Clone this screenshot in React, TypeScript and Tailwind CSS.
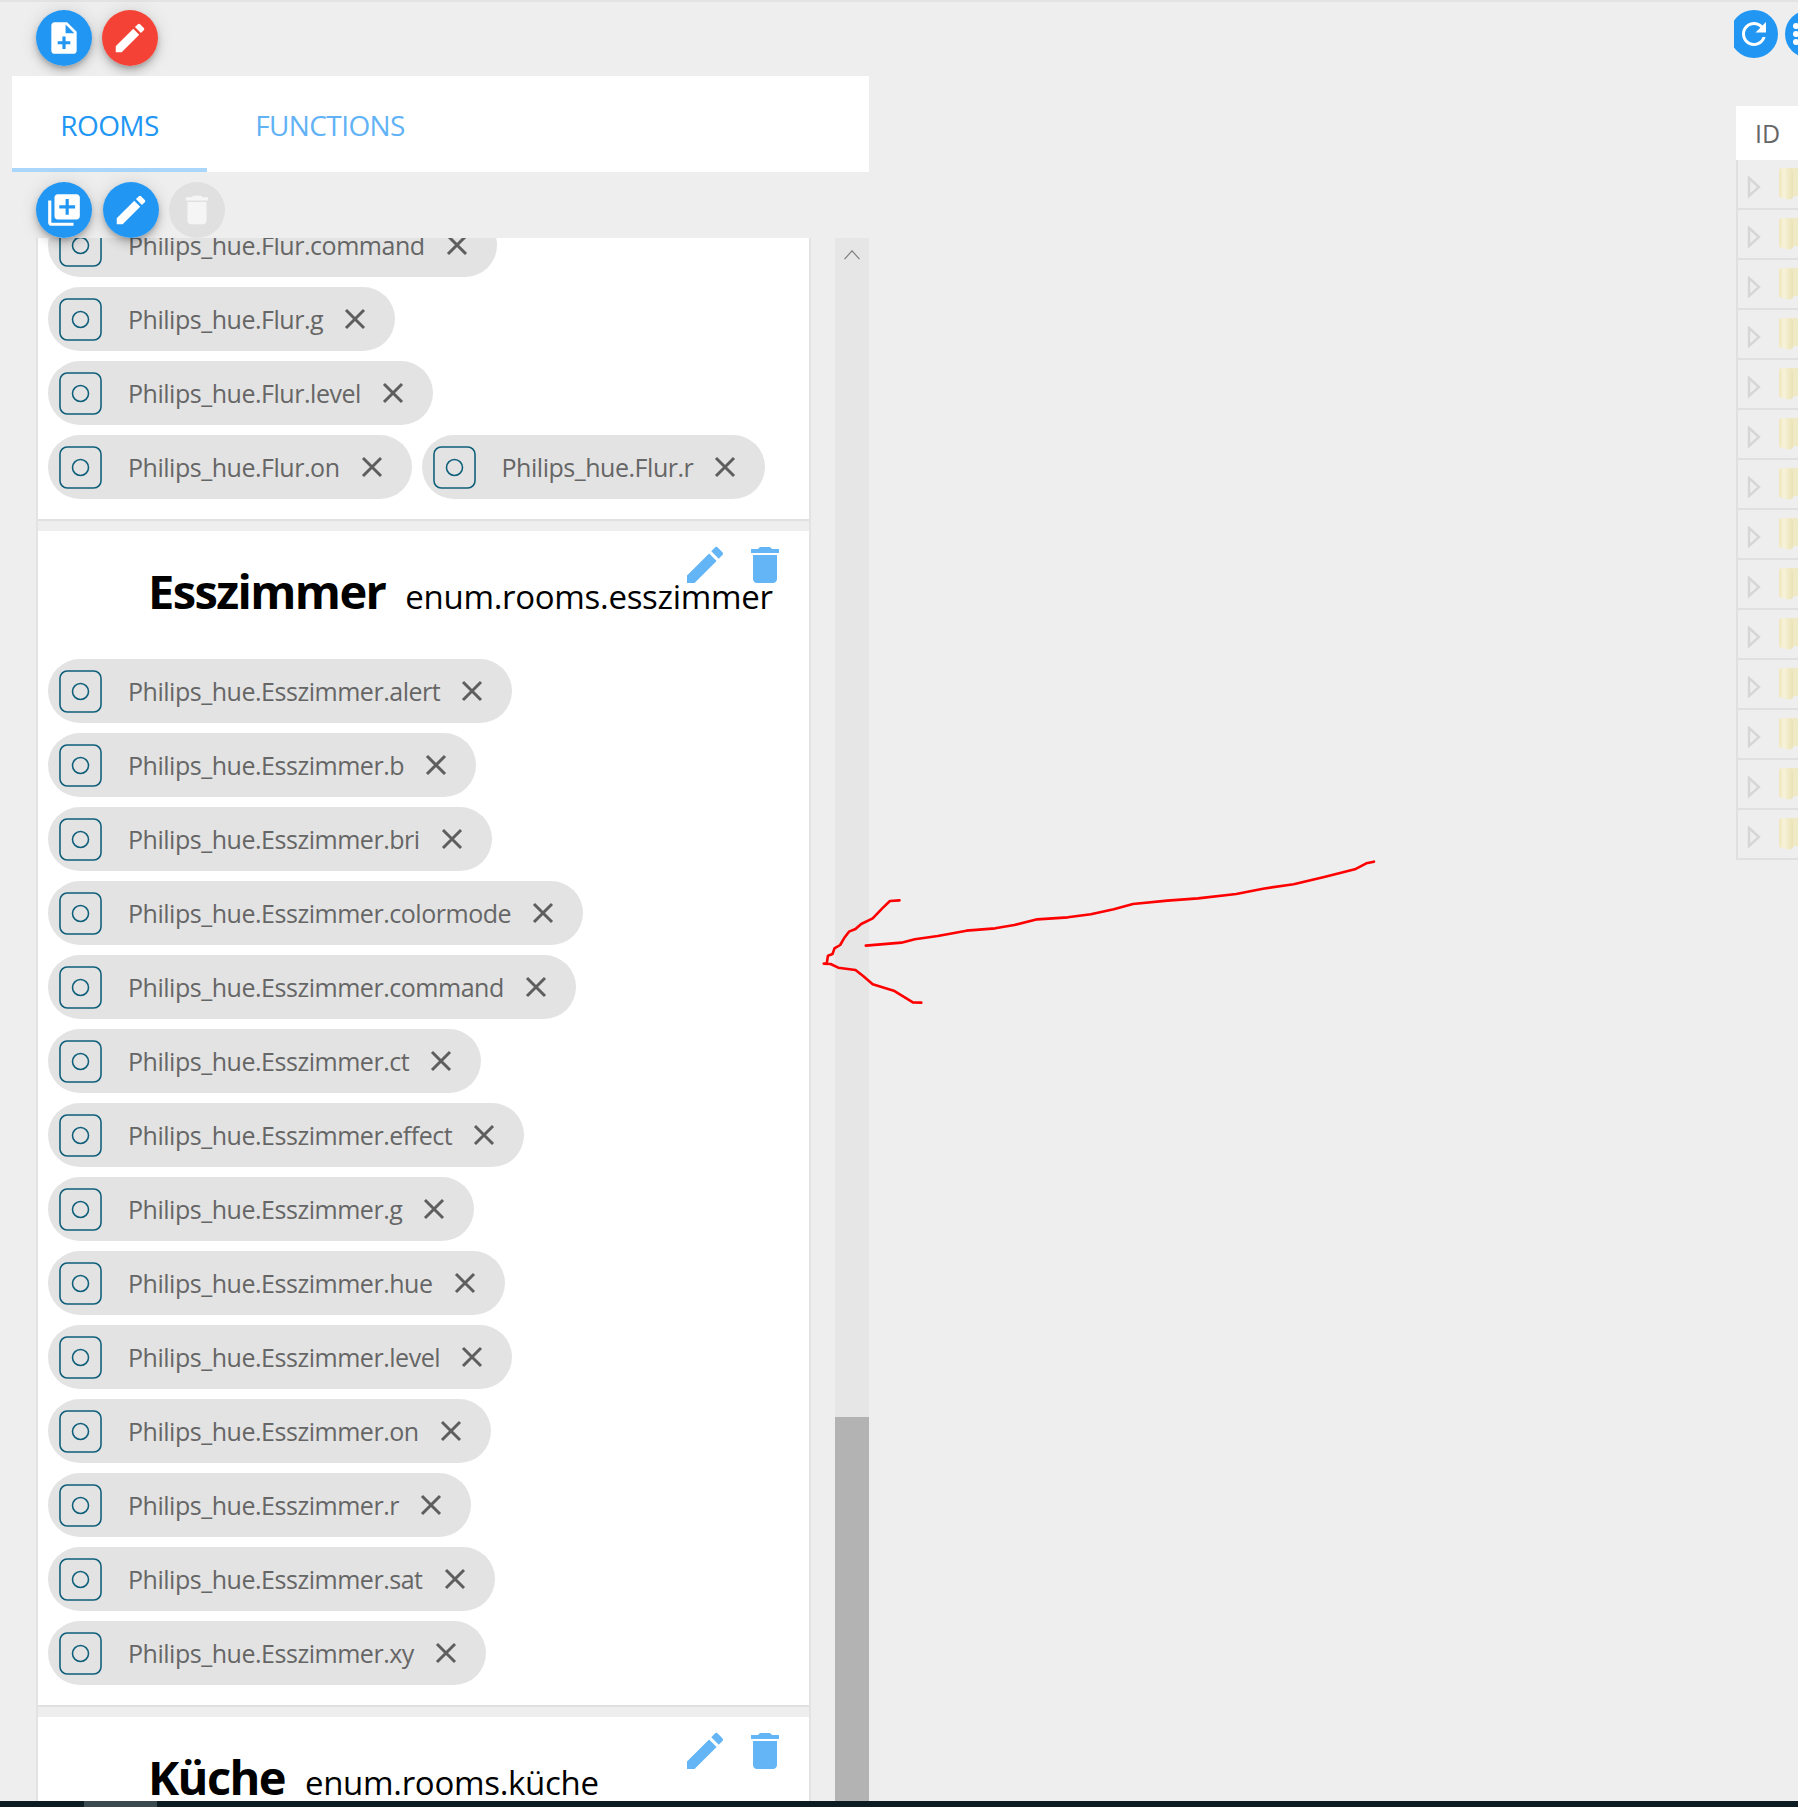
import React from "react";

const P = {
  edit: "M3 17.25V21h3.75L17.81 9.94l-3.75-3.75L3 17.25zM20.71 7.04c.39-.39.39-1.02 0-1.41l-2.34-2.34a.9959.9959 0 0 0-1.41 0l-1.83 1.83 3.75 3.75 1.83-1.83z",
  note: "M14 2H6c-1.1 0-1.99.9-1.99 2L4 20c0 1.1.89 2 1.99 2H18c1.1 0 2-.9 2-2V8l-6-6zm2 14h-3v3h-2v-3H8v-2h3v-3h2v3h3v2zm-3-7V3.5L18.5 9H13z",
  lib: "M4 6H2v14c0 1.1.9 2 2 2h14v-2H4V6zm16-4H8c-1.1 0-2 .9-2 2v12c0 1.1.9 2 2 2h12c1.1 0 2-.9 2-2V4c0-1.1-.9-2-2-2zm-1 9h-4v4h-2v-4H9V9h4V5h2v4h4v2z",
  del: "M6 19c0 1.1.9 2 2 2h8c1.1 0 2-.9 2-2V7H6v12zM19 4h-3.5l-1-1h-5l-1 1H5v2h14V4z",
  refresh: "M17.65 6.35C16.2 4.9 14.21 4 12 4c-4.42 0-7.99 3.58-7.99 8s3.57 8 7.99 8c3.73 0 6.84-2.55 7.73-6h-2.08c-.82 2.33-3.04 4-5.65 4-3.31 0-6-2.69-6-6s2.69-6 6-6c1.66 0 3.14.69 4.22 1.78L13 11h7V4l-2.35 2.35z",
};

const shadow = "shadow-[0_3px_5px_-1px_rgba(0,0,0,0.2),0_6px_10px_0_rgba(0,0,0,0.14),0_1px_18px_0_rgba(0,0,0,0.12)]";

function Icon({ d, className }: { d: string; className: string }) {
  return (
    <svg viewBox="0 0 24 24" className={className} fill="currentColor">
      <path d={d} />
    </svg>
  );
}

function Fab({ d, color }: { d: string; color: string }) {
  return (
    <button className={`flex h-[56px] w-[56px] shrink-0 items-center justify-center rounded-full text-white ${color}`}>
      <Icon d={d} className="h-[38px] w-[38px]" />
    </button>
  );
}

function Chip({ label }: { label: string }) {
  return (
    <div className="flex h-[64px] items-center rounded-full bg-[#e3e3e3] pl-[11px] pr-[26px]">
      <svg viewBox="0 0 44 44" className="h-[43px] w-[43px] shrink-0" fill="none" stroke="#0f5f7a" strokeWidth="1.6">
        <rect x="1" y="1" width="42" height="42" rx="7.5" />
        <circle cx="22" cy="22" r="8.2" />
      </svg>
      <span className="ml-[26px] whitespace-nowrap text-[25px] leading-none tracking-[-0.47px] text-[#666666]">{label}</span>
      <svg viewBox="0 0 28 28" className="ml-[18px] h-[28px] w-[28px] shrink-0" fill="none" stroke="#5e5e5e" strokeWidth="3">
        <path d="M5 5l18 18M23 5L5 23" />
      </svg>
    </div>
  );
}

function Section({ name, id, chips }: { name: string; id: string; chips: string[] }) {
  return (
    <section className="relative mb-[10px] border-b-2 border-[#e0e0e0] bg-white pb-[20px]">
      <div className="absolute right-[20px] top-[10px] flex gap-[12px] text-[#64b5f6]">
        <Icon d={P.edit} className="h-[48px] w-[48px]" />
        <Icon d={P.del} className="h-[48px] w-[48px]" />
      </div>
      <div className="flex h-[128px] items-baseline pl-[110px] pt-[28px] text-black">
        <span className="text-[47px] font-bold leading-[64px] tracking-[-1.6px]">{name}</span>
        <span className="ml-[20px] text-[33px] leading-[64px] tracking-[-0.3px]">{id}</span>
      </div>
      <div className="flex flex-wrap gap-[10px] pl-[10px]">
        {chips.map((c) => (
          <Chip key={c} label={c} />
        ))}
      </div>
    </section>
  );
}

const flur = ["command", "g", "level", "on", "r"].map((s) => `Philips_hue.Flur.${s}`);
const ess = ["alert", "b", "bri", "colormode", "command", "ct", "effect", "g", "hue", "level", "on", "r", "sat", "xy"].map(
  (s) => `Philips_hue.Esszimmer.${s}`
);

function TreeRow() {
  return (
    <div className="flex h-[50px] items-center overflow-hidden border-b-2 border-[#e0e0e0] pl-[9px]">
      <svg viewBox="0 0 14 22" className="mt-[5px] h-[22px] w-[14px] shrink-0" fill="none" stroke="#d6d6d6" strokeWidth="2.4">
        <path d="M2 2l10 9-10 9z" />
      </svg>
      <svg viewBox="0 0 32 34" className="ml-[18px] h-[34px] w-[32px] shrink-0">
        <defs>
          <linearGradient id="leaf" x1="0" x2="1" y1="0" y2="0">
            <stop offset="0" stopColor="#efe6bc" />
            <stop offset="0.35" stopColor="#f7f2da" />
            <stop offset="1" stopColor="#ebe2b4" />
          </linearGradient>
        </defs>
        <path d="M12 1h20v28H12z" fill="#f0e9c6" />
        <path d="M0 4q0-3 3-3h6q5 0 5 4v26q-4 3-9 0H3q-3 0-3-3z" fill="url(#leaf)" />
      </svg>
    </div>
  );
}

export default function App() {
  return (
    <div className="relative flex h-[1807px] w-[1798px] flex-col overflow-hidden bg-[#eeeeee] font-['Open_Sans',sans-serif]">
      <div className="flex min-h-0 flex-1 border-t-2 border-[#e3e3e3]">
        <div className="flex w-[869px] shrink-0 flex-col pl-[12px]">
          <div className="flex h-[74px] shrink-0 gap-[10px] pl-[24px] pt-[8px]">
            <div className={`rounded-full ${shadow} h-[56px]`}><Fab d={P.note} color="bg-[#2196f3]" /></div>
            <div className={`rounded-full ${shadow} h-[56px]`}><Fab d={P.edit} color="bg-[#f44336]" /></div>
          </div>
          <div className="flex h-[96px] shrink-0 bg-white">
            <div className="flex h-full w-[195px] items-center justify-center border-b-4 border-[#a9d6fa] pt-[6px] text-[28px] text-[#2196f3]">
              <span className="tracking-[-0.6px]">ROOMS</span>
            </div>
            <div className="flex h-full w-[246px] items-center justify-center pt-[2px] text-[28px] text-[#62b2f6]">
              <span className="tracking-[-0.6px]">FUNCTIONS</span>
            </div>
          </div>
          <div className="relative z-10 flex h-[66px] shrink-0 gap-[11px] pl-[24px] pt-[10px]">
            <div className={`rounded-full ${shadow} h-[56px]`}><Fab d={P.lib} color="bg-[#2196f3]" /></div>
            <div className={`rounded-full ${shadow} h-[56px]`}><Fab d={P.edit} color="bg-[#2196f3]" /></div>
            <div className="-ml-[1px]"><Fab d={P.del} color="bg-[#e0e0e0] !text-[#f5f5f5]" /></div>
          </div>
          <div className="flex min-h-0 flex-1">
            <div className="ml-[24px] w-[775px] overflow-hidden border-x-2 border-[#e3e3e3]">
              <section className="mb-[10px] border-b-2 border-[#e0e0e0] bg-white pb-[20px]">
                <div className="-mt-[25px] flex flex-wrap gap-[10px] pl-[10px]">
                  <div className="w-full"><div className="inline-flex"><Chip label={flur[0]} /></div></div>
                  <div className="w-full"><div className="inline-flex"><Chip label={flur[1]} /></div></div>
                  <div className="w-full"><div className="inline-flex"><Chip label={flur[2]} /></div></div>
                  <Chip label={flur[3]} />
                  <Chip label={flur[4]} />
                </div>
              </section>
              <Section name="Esszimmer" id="enum.rooms.esszimmer" chips={ess} />
              <Section name="Küche" id="enum.rooms.küche" chips={[]} />
            </div>
            <div className="ml-[24px] flex w-[34px] flex-col bg-[#e6e6e6]">
              <div className="flex h-[34px] items-center justify-center">
                <svg viewBox="0 0 20 12" className="h-[10px] w-[18px]" fill="none" stroke="#777777" strokeWidth="1.3">
                  <path d="M1 11L10 1l9 10" />
                </svg>
              </div>
              <div className="flex-1" />
              <div className="h-[384px] bg-[#b3b3b3]" />
            </div>
          </div>
        </div>
        <div className="ml-auto flex w-[64px] flex-col overflow-hidden">
          <div className="-ml-[4px] flex h-[104px] shrink-0 gap-[7px] pt-[8px]">
            <div className="flex h-[48px] w-[48px] shrink-0 items-center justify-center rounded-full bg-[#2196f3] text-white">
              <Icon d={P.refresh} className="h-[36px] w-[36px]" />
            </div>
            <div className="flex h-[48px] w-[48px] shrink-0 items-center rounded-full bg-[#2196f3] pl-[8px] text-white">
              <svg viewBox="0 0 6 22" className="h-[22px] w-[6px]" fill="currentColor">
                <circle cx="3" cy="3" r="3" />
                <circle cx="3" cy="11" r="3" />
                <circle cx="3" cy="19" r="3" />
              </svg>
            </div>
          </div>
          <div className="ml-[2px] flex h-[54px] shrink-0 items-center bg-white pl-[19px] pt-[2px] text-[25px] text-[#666666]">ID</div>
          <div className="ml-[2px] border-l-2 border-[#e0e0e0]">
            {Array.from({ length: 14 }).map((_, i) => (
              <TreeRow key={i} />
            ))}
          </div>
        </div>
      </div>
      <div className="flex h-[6px] shrink-0 bg-[#0c1c22]">
        <div className="ml-[84px] w-[73px] bg-[#3a4a4f]" />
      </div>
      <svg
        viewBox="0 0 1568 600"
        preserveAspectRatio="none"
        className="pointer-events-none absolute left-[800px] top-[830px] h-[200px] w-[600px]"
        fill="none"
        stroke="#ff0000"
        strokeLinecap="round"
        strokeLinejoin="round"
      >
        <path
          vectorEffect="non-scaling-stroke"
          strokeWidth="2.6"
          d="M172 347L265 338L300 328L360 318L435 302L510 295L560 285L620 268L700 262L760 253L820 238L870 222L960 212L1040 205L1140 192L1210 176L1290 163L1370 141L1450 118L1480 100L1500 95"
        />
        <path
          vectorEffect="non-scaling-stroke"
          strokeWidth="2.6"
          d="M260 211L235 213L215 235L190 265L160 282L145 297L128 305L115 325L105 345L90 355L85 372L73 377L70 400L62 401L80 402L100 413L145 420L165 438L190 463L245 482L295 517L317 518"
        />
      </svg>
    </div>
  );
}
